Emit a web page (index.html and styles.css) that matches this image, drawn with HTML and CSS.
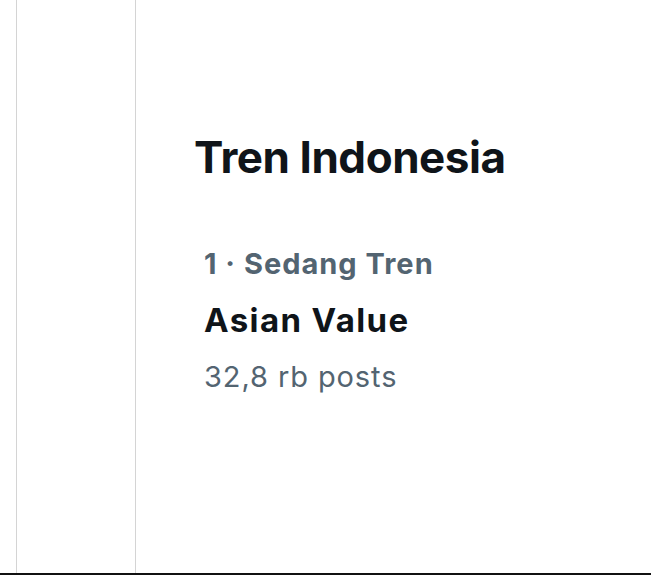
FILE: index.html
```html
<!DOCTYPE html>
<html lang="id">
<head>
  <meta charset="UTF-8">
  <meta name="viewport" content="width=device-width, initial-scale=1.0">
  <title>Tren Indonesia</title>
  <link rel="stylesheet" href="styles.css">
</head>
<body>
  <div class="screen">
    <div class="gutter"></div>
    <nav class="sidebar"></nav>
    <main class="main">
      <h1 class="title">Tren Indonesia</h1>
      <div class="trend">
        <div class="trend-meta">1 · Sedang Tren</div>
        <div class="trend-name">Asian Value</div>
        <div class="trend-count">32,8 rb posts</div>
      </div>
    </main>
  </div>
</body>
</html>
```

FILE: styles.css
```css
html, body {
  margin: 0;
  padding: 0;
  background: #fff;
}
body {
  font-family: Inter, "Noto Sans", sans-serif;
  color: #0f1419;
}
.screen {
  display: flex;
  height: 573px;
  border-bottom: 2px solid #111;
}
.gutter {
  width: 16px;
  border-right: 1px solid #d4d4d4;
}
.sidebar {
  width: 118px;
  border-right: 1px solid #d4d4d4;
}
.main {
  flex: 1;
  padding: 128px 0 0 58px;
}
.title {
  margin: 0;
  font-size: 44px;
  font-weight: 700;
  letter-spacing: -0.45px;
  line-height: 58px;
}
.trend {
  margin: 50px 0 0 10px;
}
.trend-meta {
  font-size: 29px;
  font-weight: 700;
  letter-spacing: 1px;
  color: #536471;
  line-height: 56px;
}
.trend-name {
  font-size: 33px;
  font-weight: 700;
  letter-spacing: 1.4px;
  line-height: 56px;
}
.trend-count {
  font-size: 29px;
  letter-spacing: 0.9px;
  color: #536471;
  line-height: 58px;
}
```
